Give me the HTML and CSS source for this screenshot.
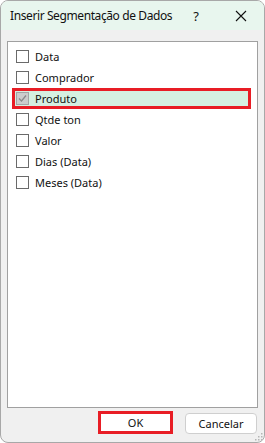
FILE: index.html
```html
<!DOCTYPE html>
<html lang="pt-BR">
<head>
  <meta charset="UTF-8">
  <title>Inserir Segmentação de Dados</title>
  <link rel="stylesheet" href="styles.css">
</head>
<body>

  <div class="window">
    <div class="titlebar">
      <span class="title">Inserir Segmentação de Dados</span>
      <span class="help">?</span>
      <svg class="close" width="12" height="12" viewBox="0 0 12 12">
        <path d="M1 1 L11 11 M11 1 L1 11" stroke="#111" stroke-width="1.1" fill="none"/>
      </svg>
    </div>

    <div class="content">
      <div class="listbox">
        <label class="item"><span class="box"></span>Data</label>
        <label class="item"><span class="box"></span>Comprador</label>
        <label class="item selected">
          <span class="box checked">
            <svg width="11" height="11" viewBox="0 0 11 11">
              <path d="M2 5.5 L4.5 8 L9 2.5" stroke="#8a8a8a" stroke-width="1.3" fill="none"/>
            </svg>
          </span>Produto
        </label>
        <label class="item"><span class="box"></span>Qtde ton</label>
        <label class="item"><span class="box"></span>Valor</label>
        <label class="item"><span class="box"></span>Dias (Data)</label>
        <label class="item"><span class="box"></span>Meses (Data)</label>
      </div>
    </div>

    <div class="footer">
      <button class="btn ok">OK</button>
      <button class="btn cancel">Cancelar</button>
      <svg class="grip" width="8" height="8" viewBox="0 0 8 8">
        <rect x="6" y="0" width="1.5" height="1.5" fill="#b5b5b5"/>
        <rect x="3" y="3" width="1.5" height="1.5" fill="#b5b5b5"/>
        <rect x="6" y="3" width="1.5" height="1.5" fill="#b5b5b5"/>
        <rect x="0" y="6" width="1.5" height="1.5" fill="#b5b5b5"/>
        <rect x="3" y="6" width="1.5" height="1.5" fill="#b5b5b5"/>
        <rect x="6" y="6" width="1.5" height="1.5" fill="#b5b5b5"/>
      </svg>
    </div>
  </div>

</body>
</html>
```

FILE: styles.css
```css
* {
  box-sizing: border-box;
}

body {
  margin: 0;
  font-family: 'Noto Sans', sans-serif;
  font-size: 11px;
  color: #111;
  background: #ffffff;
}

.window {
  width: 265px;
  height: 443px;
  border: 1px solid #a8a8a8;
  border-radius: 8px;
  background: #f0f0f0;
  display: flex;
  flex-direction: column;
  overflow: hidden;
}

.titlebar {
  height: 29px;
  background: #e8f6ee;
  display: flex;
  align-items: center;
  padding-left: 9px;
}

.title {
  font-size: 12px;
  letter-spacing: -0.4px;
  flex: 1;
  padding-bottom: 1px;
}

.help {
  font-size: 13px;
  margin-right: 36px;
}

.close {
  margin-right: 17px;
}

.content {
  flex: 1;
  padding: 11px 6px 0 6px;
  display: flex;
}

.listbox {
  flex: 1;
  background: #ffffff;
  border: 1px solid #a0a0a0;
  padding: 4px 6px 0 4px;
}

.item {
  height: 21px;
  display: flex;
  align-items: center;
  padding-left: 4px;
  gap: 6px;
}

.item.selected {
  background: #d5f0e1;
  outline: 3px solid #e81d25;
  outline-offset: -3px;
}

.box {
  width: 13px;
  height: 13px;
  border: 1px solid #6a6a6a;
  background: #ffffff;
  display: flex;
  align-items: center;
  justify-content: center;
}

.box.checked {
  background: #cccccc;
  border-color: #a4a4a4;
}

.footer {
  height: 34px;
  display: flex;
  align-items: flex-start;
  padding: 3px 6px 0 97px;
  position: relative;
}

.btn {
  font-family: 'Noto Sans', sans-serif;
  font-size: 11px;
  color: #111;
  background: #ffffff;
  padding: 0;
}

.ok {
  width: 75px;
  height: 23px;
  border: 3px solid #e81d25;
}

.cancel {
  width: 72px;
  height: 21px;
  margin-top: 2px;
  margin-left: 12px;
  border: 1px solid #cfcfcf;
  border-radius: 4px;
}

.grip {
  position: absolute;
  right: 1px;
  bottom: 1px;
}
```
